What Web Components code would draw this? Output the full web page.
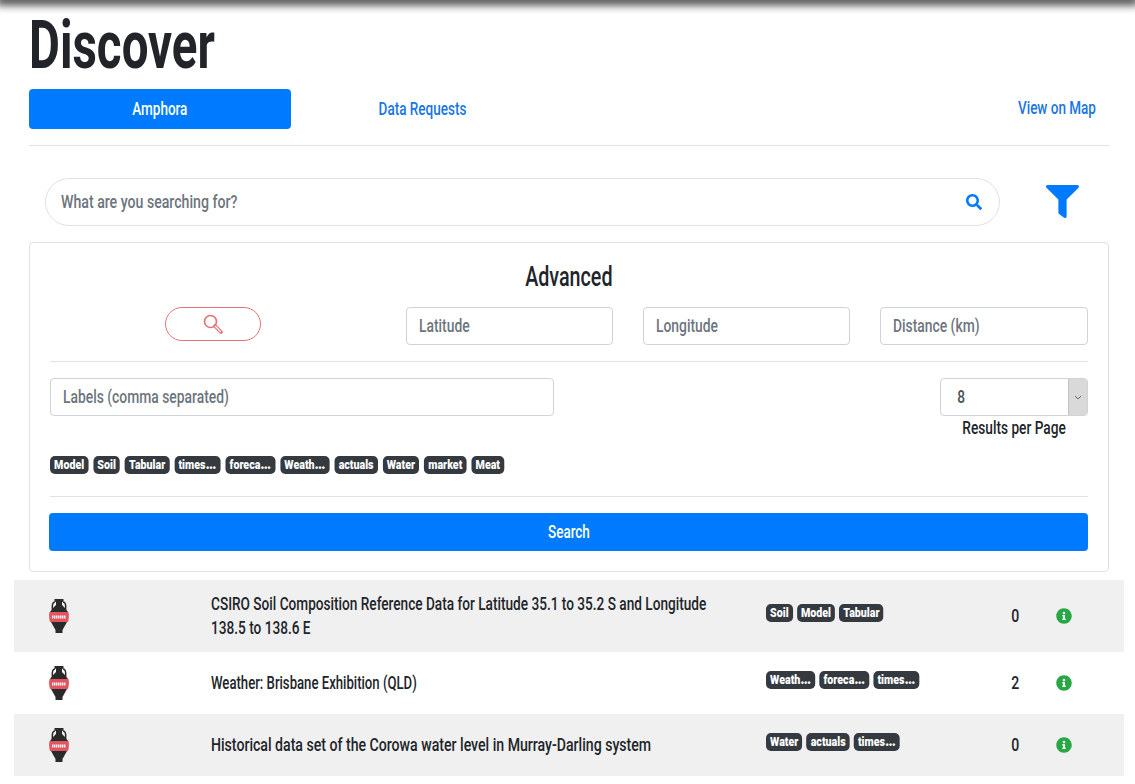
<!DOCTYPE html>
<html><head><meta charset="utf-8"><title>Discover</title>
<style>
html,body{margin:0;padding:0;background:#fff}
body{font-family:Roboto,"Liberation Sans",sans-serif;font-weight:500;font-size:18px;line-height:24px;color:#212529;--k:.78;--o:left center}
</style></head><body>
<discover-page></discover-page>
<script>
const ICON={
search:'M505 442.7L405.3 343c-4.5-4.5-10.6-7-17-7H372c27.6-35.3 44-79.7 44-128C416 93.1 322.9 0 208 0S0 93.1 0 208s93.1 208 208 208c48.3 0 92.7-16.4 128-44v16.3c0 6.4 2.5 12.5 7 17l99.7 99.7c9.4 9.4 24.6 9.4 33.9 0l28.3-28.3c9.4-9.4 9.4-24.6.1-34zM208 336c-70.7 0-128-57.2-128-128 0-70.7 57.2-128 128-128 70.7 0 128 57.2 128 128 0 70.7-57.2 128-128 128z',
filter:'M487.976 0H24.028C2.71 0-8.047 25.866 7.058 40.971L192 225.941V432c0 7.831 3.821 15.17 10.237 19.662l80 55.98C298.02 518.69 320 507.493 320 487.98V225.941l184.947-184.97C520.021 25.896 509.338 0 487.976 0z',
info:'M256 8C119.043 8 8 119.083 8 256c0 136.997 111.043 248 248 248s248-111.003 248-248C504 119.083 392.957 8 256 8zm0 110c23.196 0 42 18.804 42 42s-18.804 42-42 42-42-18.804-42-42 18.804-42 42-42zm56 254c0 6.627-5.373 12-12 12h-88c-6.627 0-12-5.373-12-12v-24c0-6.627 5.373-12 12-12h12v-64h-12c-6.627 0-12-5.373-12-12v-24c0-6.627 5.373-12 12-12h64c6.627 0 12 5.373 12 12v100h12c6.627 0 12 5.373 12 12v24z'};
const svg=(n,s,c)=>`<svg width="${s}" height="${s}" viewBox="0 0 512 512" fill="${c}" style="display:block"><path d="${ICON[n]}"/></svg>`;
const ell='<span style="font-size:17px;line-height:0">…</span>';
class Base extends HTMLElement{
  constructor(){super();this.attachShadow({mode:'open'}).innerHTML=this.render();}
  render(){return '';}
}
customElements.define('x-t',class extends Base{render(){return `<style>
:host{display:inline-block;white-space:nowrap;transform:scaleX(var(--k));transform-origin:var(--o)}
</style><slot></slot>`;}});
customElements.define('x-badge',class extends Base{render(){return `<style>
:host{display:inline-block;background:#343a40;color:#fff;border-radius:6px/5px;height:18px;line-height:18px;padding:0 5px;font-size:13px;font-weight:900;white-space:nowrap;box-sizing:border-box}
</style><slot></slot>`;}});
customElements.define('x-badges',class extends Base{render(){return `<style>
:host{display:flex;gap:var(--g,6.1px);flex-wrap:nowrap;transform:scaleX(.82);transform-origin:left center}
</style><slot></slot>`;}});
customElements.define('x-field',class extends Base{render(){return `<style>
:host{display:flex;align-items:center;box-sizing:border-box;height:38px;border:1px solid #ced4da;border-radius:4px;padding:0 11.5px;color:#6c757d;background:#fff;white-space:nowrap;--k:.77}
</style><x-t><slot></slot></x-t>`;}});
customElements.define('x-select',class extends Base{render(){return `<style>
:host{display:flex;box-sizing:border-box;height:38px;border:1px solid #ced4da;border-radius:4px;background:#fff;overflow:hidden;text-align:left}
.v{flex:1;padding-left:15px;line-height:36px;color:#495057}
.a{width:18px;background:#d9d9d9;border-left:1px solid #c4c4c4;display:flex;align-items:center;justify-content:center}
</style><span class="v"><x-t><slot></slot></x-t></span><span class="a"><svg width="8" height="5" viewBox="0 0 8 5" fill="none" stroke="#666" stroke-width="1"><path d="M1 1l3 3 3-3"/></svg></span>`;}});
customElements.define('x-tabs',class extends Base{render(){return `<style>
:host{display:grid;grid-template-columns:262px 263px 1fr;align-items:center;height:40px;color:#1976e6;padding-bottom:16px;border-bottom:1px solid #dee2e6;--o:center;--k:.75}
span{text-align:center}
.on{background:#007bff;color:#fff;border-radius:4px;height:40px;line-height:40px}
.r{text-align:right;padding-right:13px;margin-top:-2px;--o:right center}
</style><span class="on"><x-t>Amphora</x-t></span><span><x-t>Data Requests</x-t></span><span class="r"><x-t>View on Map</x-t></span>`;}});
customElements.define('x-search',class extends Base{render(){return `<style>
:host{display:flex;align-items:center;padding:32px 0 16px 16px;--k:.785}
.p{width:955px;height:48px;box-sizing:border-box;border:1px solid #dee2e6;border-radius:24px;display:flex;align-items:center;justify-content:space-between;padding:0 17px 0 15px;color:#6c757d}
.f{margin-left:46px;margin-top:-2px}
</style><div class="p"><x-t>What are you searching for?</x-t>${svg('search',16,'#007bff')}</div><div class="f">${svg('filter',33,'#007bff')}</div>`;}});
customElements.define('x-locate',class extends Base{render(){return `<style>
:host{display:flex;justify-content:center;align-items:center;height:38px}
.b{width:96px;height:34px;box-sizing:border-box;border:1px solid #e57373;border-radius:17px;display:flex;align-items:center;justify-content:center;margin-top:-4px}
</style><div class="b"><svg width="20" height="20" viewBox="0 0 20 20" fill="none" stroke="#e57373"><circle cx="7.5" cy="7.5" r="6" stroke-width="1.7"/><path d="M12 12l6 6" stroke-width="3.6" stroke-linecap="round"/><path d="M12.500 12.500l5 5" stroke="#fff" stroke-width="1.200" stroke-linecap="round"/></svg></div>`;}});
customElements.define('x-advanced',class extends Base{render(){return `<style>
:host{display:block;border:1px solid #dee2e6;border-radius:4px;padding:16px 20px 20px;box-sizing:border-box;height:330px}
h2{margin:0;font-size:27px;line-height:36px;font-weight:500;text-align:center;color:#212529;--o:center;--k:.73}
.g{display:grid;grid-template-columns:1fr 207px 207px 208px;gap:30px;margin-top:12px}
hr{border:0;border-top:1px solid #dee2e6;margin:16px 0}
.l{display:flex;justify-content:space-between}
.l x-field{width:504px}
.s{width:148px;text-align:center;--o:center;--k:.76}
x-badges{margin-top:16px}
.b{display:block;height:38px;line-height:38px;background:#007bff;color:#fff;text-align:center;border-radius:4px;margin-left:-1px;--o:center;--k:.75}
hr.t{margin-top:22px}
</style><h2><x-t>Advanced</x-t></h2>
<div class="g"><x-locate></x-locate><x-field>Latitude</x-field><x-field>Longitude</x-field><x-field>Distance (km)</x-field></div>
<hr>
<div class="l"><x-field>Labels (comma separated)</x-field><div class="s"><x-select>8</x-select><div><x-t>Results per Page</x-t></div></div></div>
<x-badges><x-badge>Model</x-badge><x-badge>Soil</x-badge><x-badge>Tabular</x-badge><x-badge>times${ell}</x-badge><x-badge>foreca${ell}</x-badge><x-badge>Weath${ell}</x-badge><x-badge>actuals</x-badge><x-badge>Water</x-badge><x-badge>market</x-badge><x-badge>Meat</x-badge></x-badges>
<hr class="t">
<span class="b"><x-t>Search</x-t></span>`;}});
customElements.define('x-amphora',class extends Base{render(){return `<style>:host{display:block;width:20px;height:34px}</style>
<svg width="20" height="34" viewBox="0 0 20 34" style="display:block"><path fill="none" stroke="#2a2a2a" stroke-width="1.500" d="M6 3C2.500 3 3 10 4 13M14 3c3.500 0 3 7 2 10"/><path fill="#2a2a2a" d="M5.500 0h9v2.500l-1.500 .5v3l3 3 3 4H1l3-4 3-3V3l-1.500-.5zM2 23h16l-4.500 8v3h-7v-3z"/><path fill="#e2555f" d="M.5 13h19q1 5-.5 10H1Q-.500 18 .5 13z"/><path stroke="#fff" stroke-width="3" stroke-dasharray="1.500 .5" opacity=".9" d="M3 18h14"/></svg>`;}});
customElements.define('x-row',class extends Base{render(){return `<style>
:host{display:grid;grid-template-columns:197px 555px 220px 58px 40px 1fr;align-items:center;box-sizing:border-box;padding:12px 0;min-height:62px;--g:5px}
:host([shade]){background:#f0f0f0}
.i{padding-left:35px}
.tg{margin-bottom:6px}
.n{text-align:center;--o:center}
.inf{display:flex;justify-content:center}
.ti{width:calc(525px / var(--tk));transform:scaleX(var(--tk));transform-origin:left center}
</style><div class="i"><x-amphora></x-amphora></div><div class="ti"><slot></slot></div><div class="tg"><x-badges><slot name="tags"></slot></x-badges></div><div class="n"><x-t>${this.getAttribute('n')}</x-t></div><div class="inf">${svg('info',16,'#28a745')}</div>`;}});
customElements.define('discover-page',class extends Base{render(){return `<style>
:host{display:block;width:1135px;height:784px;overflow:hidden;position:relative}
.top{height:0;box-shadow:0 0 10px 4px #111}
.c{padding:11px 26px 0 29px}
h1{margin:0 0 9px;font-size:66px;line-height:69px;font-weight:700;color:#212529;--k:.72}
.rows{margin:8px 11px 0 14px}
</style><div class="top"></div>
<div class="c"><h1><x-t>Discover</x-t></h1><x-tabs></x-tabs><x-search></x-search><x-advanced></x-advanced></div>
<div class="rows">
<x-row shade n="0" style="--tk:.757">CSIRO Soil Composition Reference Data for Latitude 35.1 to 35.2 S and Longitude 138.5 to 138.6 E<x-badge slot="tags">Soil</x-badge><x-badge slot="tags">Model</x-badge><x-badge slot="tags">Tabular</x-badge></x-row>
<x-row n="2" style="--tk:.73">Weather: Brisbane Exhibition (QLD)<x-badge slot="tags">Weath${ell}</x-badge><x-badge slot="tags">foreca${ell}</x-badge><x-badge slot="tags">times${ell}</x-badge></x-row>
<x-row shade n="0" style="--tk:.784">Historical data set of the Corowa water level in Murray-Darling system<x-badge slot="tags">Water</x-badge><x-badge slot="tags">actuals</x-badge><x-badge slot="tags">times${ell}</x-badge></x-row>
</div>`;}});
</script></body></html>
